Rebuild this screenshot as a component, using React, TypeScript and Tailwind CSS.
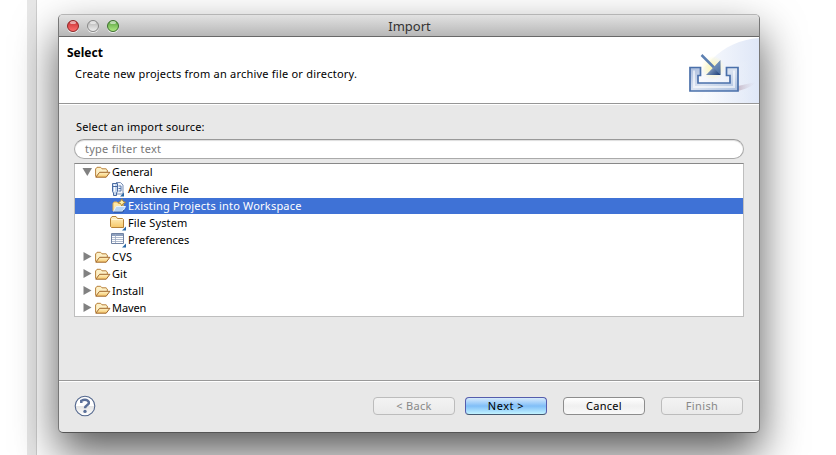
import React from "react";

const FolderOpen = () => (
  <svg width="16" height="16" viewBox="0 0 16 16" className="shrink-0">
    <defs>
      <linearGradient id="fo" x1="0" y1="0" x2="0" y2="1">
        <stop offset="0" stopColor="#fff3c8" />
        <stop offset="1" stopColor="#f6c768" />
      </linearGradient>
    </defs>
    <path d="M.6 12.500V5l1.400-1.700h3.600L7 4.800h4l1.300 1.200v2" fill="#fdf0c6" stroke="#b8813b" />
    <path d="M.8 13.200 4.600 8.300h10.300l-3.700 4.900z" fill="url(#fo)" stroke="#a0662a" strokeLinejoin="round" />
  </svg>
);

const ArchiveIcon = () => (
  <svg width="16" height="16" viewBox="0 0 16 16" className="shrink-0">
    <path d="M6 1.500h4.500l2.500 2.500v9H6" fill="#f1f5fc" stroke="#7a90b6" />
    <path d="M8.500 5H11v5H8.500M8.500 7.500H11" fill="none" stroke="#5676aa" />
    <path d="M2.500 2.500h5v8l-1 1.500v2.500h-3V12l-1-1.500z" fill="#c8d8ee" stroke="#4b6ca2" />
    <path d="M4.500 3.500v7" stroke="#fff" />
    <path d="M2.500 5.500h5" stroke="#4b6ca2" />
    <path d="M14 11.500v4h-4z" fill="#2767a5" />
  </svg>
);

const ProjectIcon = () => (
  <svg width="16" height="16" viewBox="0 0 16 16" className="shrink-0">
    <path d="M3 13V5.500l1-1.500h3l1.200 1.500h5v3" fill="#ffe9a8" stroke="#e0ae50" />
    <path d="M3.500 13.500 6.200 8.500h9.300l-3 5z" fill="#b6d5f5" stroke="#e9f3ff" />
    <path d="M3.500 14h9.300l1.200-2" fill="none" stroke="#254c91" />
    <path d="m11.800.800 1.200 2.400 2.500 1.200L13 5.600l-1.200 2.400-1.200-2.400-2.400-1.200 2.400-1.200z" fill="#fff1a6" stroke="#ab8533" strokeWidth=".9" />
  </svg>
);

const FolderClosed = () => (
  <svg width="16" height="16" viewBox="0 0 16 16" className="shrink-0">
    <path d="M.5 11.500v-8l1.500-2h4l1.500 2h5l1 1v8h-12z" fill="url(#fo)" stroke="#b78237" />
    <path d="M1.500 4.500h11" stroke="#fff7da" />
    <path d="M16 11.500v4h-4z" fill="#2767a5" />
  </svg>
);

const PreferencesIcon = () => (
  <svg width="16" height="16" viewBox="0 0 16 16" className="shrink-0">
    <path d="M1.500 1.500h12v10h-12z" fill="#fff" stroke="#7183a3" />
    <path d="M2 2h11v2H2z" fill="#8d9fbd" />
    <path d="M2 5.500h11M2 7.500h11M2 9.500h11M5.500 2v9" stroke="#9dabc3" strokeWidth=".8" />
    <path d="M16 11.500v4h-4z" fill="#2767a5" />
  </svg>
);

const ImportBanner = () => (
  <svg width="76" height="66" viewBox="0 0 76 66" className="shrink-0">
    <defs>
      <linearGradient id="sweep" x1="0" y1="0" x2="1" y2="0">
        <stop offset="0" stopColor="#fff" />
        <stop offset="1" stopColor="#dfe7f7" />
      </linearGradient>
      <linearGradient id="tray" x1="0" y1="0" x2="1" y2="1">
        <stop offset="0" stopColor="#a9bcdc" />
        <stop offset=".5" stopColor="#dae3f1" />
        <stop offset="1" stopColor="#aabfdf" />
      </linearGradient>
      <linearGradient id="arrow" x1="0" y1="0" x2="1" y2="1">
        <stop offset=".2" stopColor="#b3c7df" />
        <stop offset="1" stopColor="#153974" />
      </linearGradient>
      <radialGradient id="glow">
        <stop offset="0" stopColor="#fff7ad" />
        <stop offset="1" stopColor="#fff7ad" stopOpacity="0" />
      </radialGradient>
      <linearGradient id="cast" x1="0" y1="0" x2="1" y2="0">
        <stop offset="0" stopColor="#b9a4b5" stopOpacity=".7" />
        <stop offset="1" stopColor="#d6d4e5" stopOpacity="0" />
      </linearGradient>
    </defs>
    <path d="M4 66C14 31 38 4 76 1v65z" fill="url(#sweep)" />
    <path d="M17 66C27 38 48 24 76 22v44z" fill="url(#sweep)" opacity=".5" />
    <path d="M55 54V49L73 45Q68 51 55 54z" fill="url(#cast)" />
    <circle cx="30" cy="31" r="12" fill="url(#glow)" />
    <path d="M7 30.500h10.500v8H15v7.500h32v-7.500h-3.500v-8H55v23.500H7z" fill="url(#tray)" stroke="#4a70aa" strokeWidth="1.700" />
    <path d="M11 33.500v16.500h40V33.500" fill="none" stroke="#fff" strokeOpacity=".6" strokeWidth="2" />
    <path d="m18.500 18 13 13" stroke="#5d80b2" strokeWidth="2.500" />
    <path d="M37.500 23v15H23z" fill="url(#arrow)" />
    <path d="M37 23.500 31 31l6 6.500z" fill="#6d8fba" opacity=".6" />
  </svg>
);

const HelpIcon = () => (
  <svg width="22" height="22" viewBox="0 0 22 22">
    <defs>
      <linearGradient id="help" x1="0" y1="0" x2="0" y2="1">
        <stop offset=".5" stopColor="#fff" />
        <stop offset=".52" stopColor="#e5e5e5" />
        <stop offset="1" stopColor="#fff" />
      </linearGradient>
    </defs>
    <circle cx="11" cy="11" r="9.800" fill="url(#help)" stroke="#53678d" strokeWidth="1.100" />
    <path d="M7.300 8V5.800q3.700-1.800 6.200-.300c2.500 1.700 1.300 3.700-.5 4.700-1.500.900-2 1.400-2 3" fill="none" stroke="#5b7099" strokeWidth="2.500" />
    <circle cx="11" cy="16.400" r="1.700" fill="#5b7099" />
  </svg>
);

const rows = [
  { name: "General", icon: <FolderOpen />, level: 0, open: true, track: "tracking-[0px]" },
  { name: "Archive File", icon: <ArchiveIcon />, level: 1, track: "tracking-[0.22px]" },
  { name: "Existing Projects into Workspace", icon: <ProjectIcon />, level: 1, selected: true, track: "tracking-[0.2px]" },
  { name: "File System", icon: <FolderClosed />, level: 1, track: "tracking-[0.15px]" },
  { name: "Preferences", icon: <PreferencesIcon />, level: 1, track: "tracking-[0px]" },
  { name: "CVS", icon: <FolderOpen />, level: 0, track: "tracking-[0.2px]" },
  { name: "Git", icon: <FolderOpen />, level: 0, track: "tracking-[0.1px]" },
  { name: "Install", icon: <FolderOpen />, level: 0, track: "tracking-[0.05px]" },
  { name: "Maven", icon: <FolderOpen />, level: 0, track: "tracking-[-0.1px]" },
];

const Light = ({ tone }: { tone: string }) => (
  <span className={`relative block h-3 w-3 overflow-hidden rounded-full border ${tone} shadow-[0_1px_0_#eee]`}>
    <span className="absolute top-0 left-[2px] h-[3px] w-[6px] rounded-full bg-white/55" />
  </span>
);

const buttonBase = "flex h-[18px] w-[82px] items-start justify-center rounded-[4px] border leading-[15px]";

export default function App() {
  return (
    <main className="flex h-[455px] w-[836px] overflow-hidden bg-white font-['Noto_Sans','Liberation_Sans',sans-serif] text-[11px] text-black">
      <div className="ml-[27px] h-full w-[10px] shrink-0 border-r border-[#cdcdcd] bg-[#e7e7e7]" />
      <section className="relative mt-[14px] ml-[21px] flex h-[419px] w-[702px] shrink-0 flex-col overflow-hidden rounded-[5px] border border-t-[#b5b5b5] border-r-[#777] border-b-[#555] border-l-[#777] bg-[#e8e8e8] shadow-[0_20px_44px_rgba(0,0,0,0.65)]">
        <header className="flex h-[22px] shrink-0 items-center border-b border-[#686868] bg-linear-to-b from-[#e2e2e2] to-[#b7b7b7]">
          <div className="flex w-[60px] gap-2 pl-2">
            <Light tone="border-[#8e2525] bg-linear-to-b from-[#c52f34] to-[#ff6c6c]" />
            <Light tone="border-[#888] bg-linear-to-b from-[#b5b5b5] to-[#eee]" />
            <Light tone="border-[#3c6f2c] bg-linear-to-b from-[#58a040] to-[#aeea82]" />
          </div>
          <h1 className="flex-1 pr-[59px] text-center text-[13px] leading-[20px] tracking-[0px] text-[#333]">Import</h1>
        </header>
        <div className="flex h-[67px] shrink-0 justify-between border-b border-[#969696] bg-white">
          <div className="pt-[7px] pl-2">
            <h2 className="text-[12px] leading-[17px] font-bold">Select</h2>
            <p className="mt-[4px] pl-2 leading-[17px] tracking-[0.22px]">Create new projects from an archive file or directory.</p>
          </div>
          <ImportBanner />
        </div>
        <div className="flex h-[277px] shrink-0 flex-col border-t border-b border-t-white border-b-[#999] px-[15px] pt-[13px]">
          <label className="pl-[2px] leading-[17px] tracking-[0.17px]">Select an import source:</label>
          <div className="mt-[4px] flex h-[20px] shrink-0 items-center rounded-full border border-[#aaa] border-t-[#999] bg-white pl-[10px] tracking-[0.25px] text-[#777] shadow-[inset_0_1px_1px_#ddd]">type filter text</div>
          <div className="mt-[4px] h-[154px] shrink-0 overflow-hidden border border-[#bebebe] border-t-[#888] bg-white">
            {rows.map((row) => (
              <div key={row.name} className={`flex h-[17px] items-start border-b border-white bg-clip-padding ${row.selected ? "bg-[#3f72d6] text-white" : ""} ${row.level ? "pl-[35px]" : "pl-[7px]"}`}>
                {row.level === 0 && (
                  <svg width="13" height="13" viewBox="0 0 13 13" className="mt-px shrink-0">
                    <path d={row.open ? "M.5 3h9.500l-4.700 8z" : "M1.500 2v9l8-4.500z"} fill="#818181" />
                  </svg>
                )}
                {row.icon}
                <span className={`leading-[15px] ${row.level ? "ml-[2px]" : "ml-px"} ${row.track}`}>{row.name}</span>
              </div>
            ))}
          </div>
        </div>
        <footer className="flex flex-1 border-t border-white pt-[13px] pr-4 pl-[15px]">
          <HelpIcon />
          <div className="mt-[2px] ml-auto flex">
            <div className={`${buttonBase} border-[#bcbcbc] bg-linear-to-b from-[#f3f3f3] to-[#eaeaea] tracking-[0.3px] text-[#888]`}>&lt; Back</div>
            <div className={`${buttonBase} ml-[10px] border-[#555dad] border-b-[#45586f] bg-linear-to-b from-[#d7eafb] via-[#80bef7] to-[#c2f3ff] tracking-[0.5px]`}>Next &gt;</div>
            <div className={`${buttonBase} ml-4 border-[#8d8d8d] bg-linear-to-b from-white via-[#f0f0f0] to-[#f9f9f9] tracking-[0.3px]`}>Cancel</div>
            <div className={`${buttonBase} ml-4 border-[#bcbcbc] bg-linear-to-b from-[#f3f3f3] to-[#eaeaea] tracking-[0.4px] text-[#888]`}>Finish</div>
          </div>
        </footer>
      </section>
    </main>
  );
}
